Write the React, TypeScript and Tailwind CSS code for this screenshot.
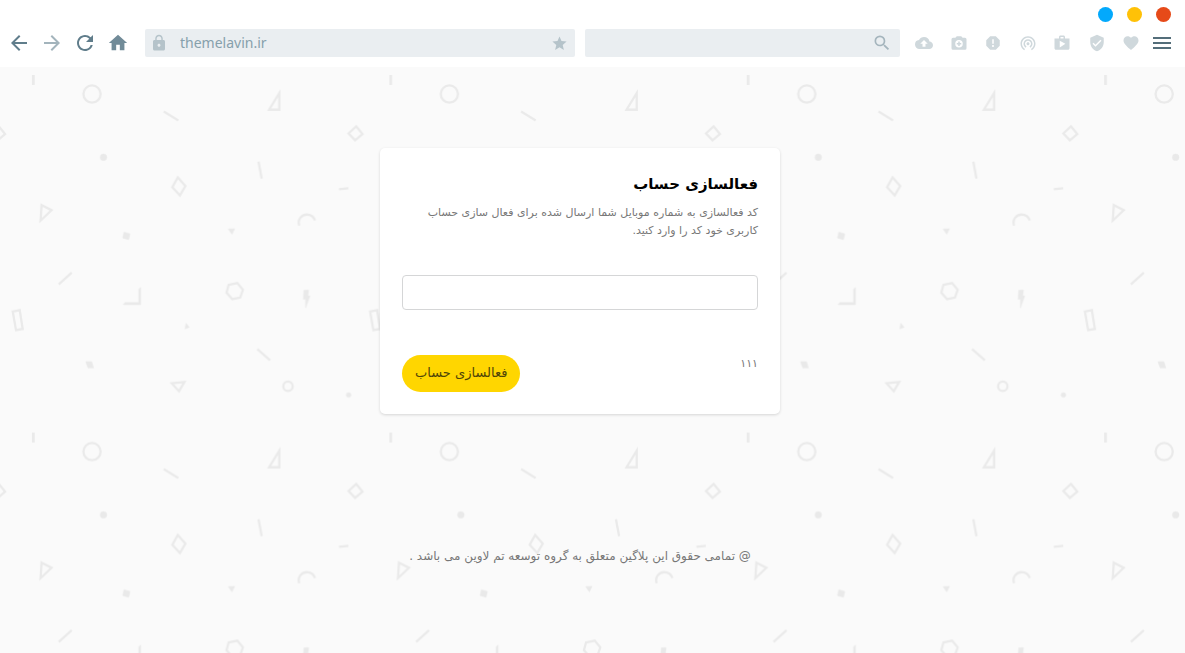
import {
  MdArrowBack,
  MdArrowForward,
  MdBackup,
  MdFavorite,
  MdHome,
  MdLock,
  MdMenu,
  MdRefresh,
  MdReport,
  MdSearch,
  MdShop,
  MdStar,
  MdVerifiedUser,
  MdWifiTethering,
} from "react-icons/md";

const CameraIcon = () => {
  return (
    <svg viewBox="0 0 24 24" className="size-[18px]" fill="currentColor">
      <path
        fillRule="evenodd"
        d="M9 3 7.17 5H4a2 2 0 0 0-2 2v12a2 2 0 0 0 2 2h16a2 2 0 0 0 2-2V7a2 2 0 0 0-2-2h-3.17L15 3H9zm3 5a5 5 0 1 1 0 10 5 5 0 0 1 0-10z"
      />
      <path d="M11 10h2v2h2v2h-2v2h-2v-2H9v-2h2z" />
    </svg>
  );
};

const navButtons = [
  { id: 1, label: "Back", icon: <MdArrowBack size={24} />, color: "text-[#607d8b]" },
  { id: 2, label: "Forward", icon: <MdArrowForward size={24} />, color: "text-[#a3b4bc]" },
  { id: 3, label: "Reload", icon: <MdRefresh size={24} />, color: "text-[#607d8b]" },
  { id: 4, label: "Home", icon: <MdHome size={22} />, color: "text-[#718b98]" },
];

const toolButtons = [
  { id: 1, label: "Upload", icon: <MdBackup size={18} /> },
  { id: 2, label: "Capture", icon: <CameraIcon /> },
  { id: 3, label: "Report", icon: <MdReport size={18} /> },
  { id: 4, label: "Cast", icon: <MdWifiTethering size={18} /> },
  { id: 5, label: "Store", icon: <MdShop size={18} /> },
  { id: 6, label: "Protection", icon: <MdVerifiedUser size={18} /> },
  { id: 7, label: "Favorites", icon: <MdFavorite size={18} /> },
];

const BrowserBar = () => {
  return (
    <header className="bg-white h-[67px] flex flex-col">
      <div className="flex justify-end gap-[14px] pt-[7px] pr-[14px]">
        <button aria-label="Minimize" className="size-[15px] rounded-full bg-[#03a9fc]" />
        <button aria-label="Maximize" className="size-[15px] rounded-full bg-[#ffc107]" />
        <button aria-label="Close" className="size-[15px] rounded-full bg-[#e64a19]" />
      </div>
      <div className="flex items-center mt-[7px] pl-[7px] pr-[11px]">
        <nav className="flex items-center gap-[9px]">
          {navButtons.map(({ id, label, icon, color }) => (
            <button
              key={id}
              aria-label={label}
              className={`size-6 flex items-center justify-center ${color}`}
            >
              {icon}
            </button>
          ))}
        </nav>
        <label className="flex flex-[420] min-w-0 items-center h-7 ml-[15px] px-[5px] rounded-[2px] bg-[#eaeef1] text-[#b5c3ca]">
          <MdLock size={18} />
          <input
            type="text"
            aria-label="Address"
            defaultValue="themelavin.ir"
            className="flex-1 min-w-0 ml-3 bg-transparent outline-none font-['Noto_Sans',sans-serif] text-sm text-[#86a0ac]"
          />
          <MdStar size={17} className="mr-0.5" />
        </label>
        <label className="flex flex-[299] min-w-0 items-center h-7 ml-2.5 px-2 rounded-[2px] bg-[#eaeef1] text-[#a5b5bd]">
          <input
            type="text"
            aria-label="Search"
            className="flex-1 min-w-0 bg-transparent outline-none text-sm"
          />
          <MdSearch size={20} />
        </label>
        <div className="flex justify-between w-[225px] ml-[15px] text-[#cfd8dc]">
          {toolButtons.map(({ id, label, icon }) => (
            <button key={id} aria-label={label}>
              {icon}
            </button>
          ))}
        </div>
        <button aria-label="Menu" className="ml-2.5 text-[#546e7a]">
          <MdMenu size={24} />
        </button>
      </div>
    </header>
  );
};

// Repeating outline shapes behind the page
const ShapesBackground = () => {
  return (
    <svg className="absolute inset-0 w-full h-full" aria-hidden="true">
      <defs>
        <pattern id="shapes" width="357.4" height="357.6" patternUnits="userSpaceOnUse">
          <g transform="translate(0 -67)" fill="none" stroke="#eaeaea" strokeWidth="2.3">
            <path d="M33.3 75v10" strokeWidth="2.8" />
            <circle cx="92" cy="94" r="8.6" />
            <path d="M163.7 111.5l14.6 9" />
            <path d="M356.2 126.3l6.3 7.7-7.4 6.3-6.5-6.9z" />
            <path d="M-1.2 126.3l6.3 7.7-7.4 6.3-6.5-6.9z" />
            <path d="M177.8 177.3l7.6 8.7-5.5 9.5-7.6-8.3z" />
            <path d="M41.6 205l10 5.2-11 10.4z" />
            <path d="M279.3 93v16.7h-10.2z" />
            <path d="M258.5 161.7l3.2 17" />
            <path d="M339 189.3l9.4-1.1" />
            <path d="M299.3 225.8c-2-6 2-11.2 7.5-11.2 4 0 7 2.2 8.3 5.9" />
            <path d="M58.7 284.3l13-11.6" />
            <path d="M12.7 311.5l7-1.3 3 18.7-6.7 1.2z" />
            <path d="M228.7 284.8l8.6-1.7 5.6 6.7-2.7 7.7-7.9 1.7-5.8-6.6z" />
            <path d="M257.3 349l12.8 11.4" />
            <path d="M171.8 383.3l12.6-1.3-5.4 9.3z" />
            <circle cx="288" cy="386.3" r="4.7" />
          </g>
          <g transform="translate(0 -67)" fill="#e9e9e9" stroke="#e9e9e9" strokeWidth="0.5">
            <circle cx="103.5" cy="157.3" r="3.3" />
            <path d="M124 232l6 1.7-1.3 6-6-1.7z" />
            <path d="M228.3 229l6.4-.3-2.7 5.6z" />
            <path d="M140.7 287.3v17.4h-17.4l1.7-2.2h13.7v-13z" />
            <path d="M186 323.3l3.3 4-4.3 1.7z" />
            <path d="M85.7 361.7h6l2 6.3H88z" />
            <path d="M304 290.3l4.7-.3-.7 5.7 2 .3-4.3 12v-8.7h-2.4z" />
            <circle cx="348.7" cy="395" r="2.4" />
          </g>
        </pattern>
      </defs>
      <rect width="100%" height="100%" fill="url(#shapes)" />
    </svg>
  );
};

const ActivationCard = () => {
  return (
    <form
      onSubmit={(e) => e.preventDefault()}
      className="w-full max-w-[400px] px-[22px] pt-6 pb-[22px] rounded-[5px] bg-white shadow-[0_1px_3px_rgba(0,0,0,0.15)]"
    >
      <h1 className="text-[15px] leading-6 font-bold text-black">فعالسازی حساب</h1>
      <p className="mt-2 text-[11px] leading-[18px] text-[#777]">
        کد فعالسازی به شماره موبایل شما ارسال شده برای فعال سازی حساب کاربری
        خود کد را وارد کنید.
      </p>
      <input
        type="text"
        aria-label="کد فعالسازی"
        className="block w-full h-[35px] mt-[35px] px-3 rounded-[4px] border border-[#d5d6d7] bg-white text-sm outline-none"
      />
      <div className="flex justify-between items-start mt-[45px]">
        <span className="text-[11px] leading-[18px] text-[#777]">۱۱۱</span>
        <button
          type="submit"
          className="h-[37px] px-[13px] pb-0.5 rounded-full bg-[#ffd600] text-[13px] leading-5 text-[#4f4508]"
        >
          فعالسازی حساب
        </button>
      </div>
    </form>
  );
};

const App = () => {
  return (
    <div className="min-h-screen flex flex-col bg-[#fafafa]">
      <BrowserBar />
      <main
        dir="rtl"
        lang="fa"
        className="relative flex-1 overflow-hidden font-['DejaVu_Sans',sans-serif]"
      >
        <ShapesBackground />
        <div className="relative flex flex-col items-center pt-[81px] mr-[25px]">
          <ActivationCard />
          <footer className="mt-[133px] text-xs leading-[18px] text-[#777]">
            @ تمامی حقوق این پلاگین متعلق به گروه توسعه تم لاوین می باشد .
          </footer>
        </div>
      </main>
    </div>
  );
};

export default App;
